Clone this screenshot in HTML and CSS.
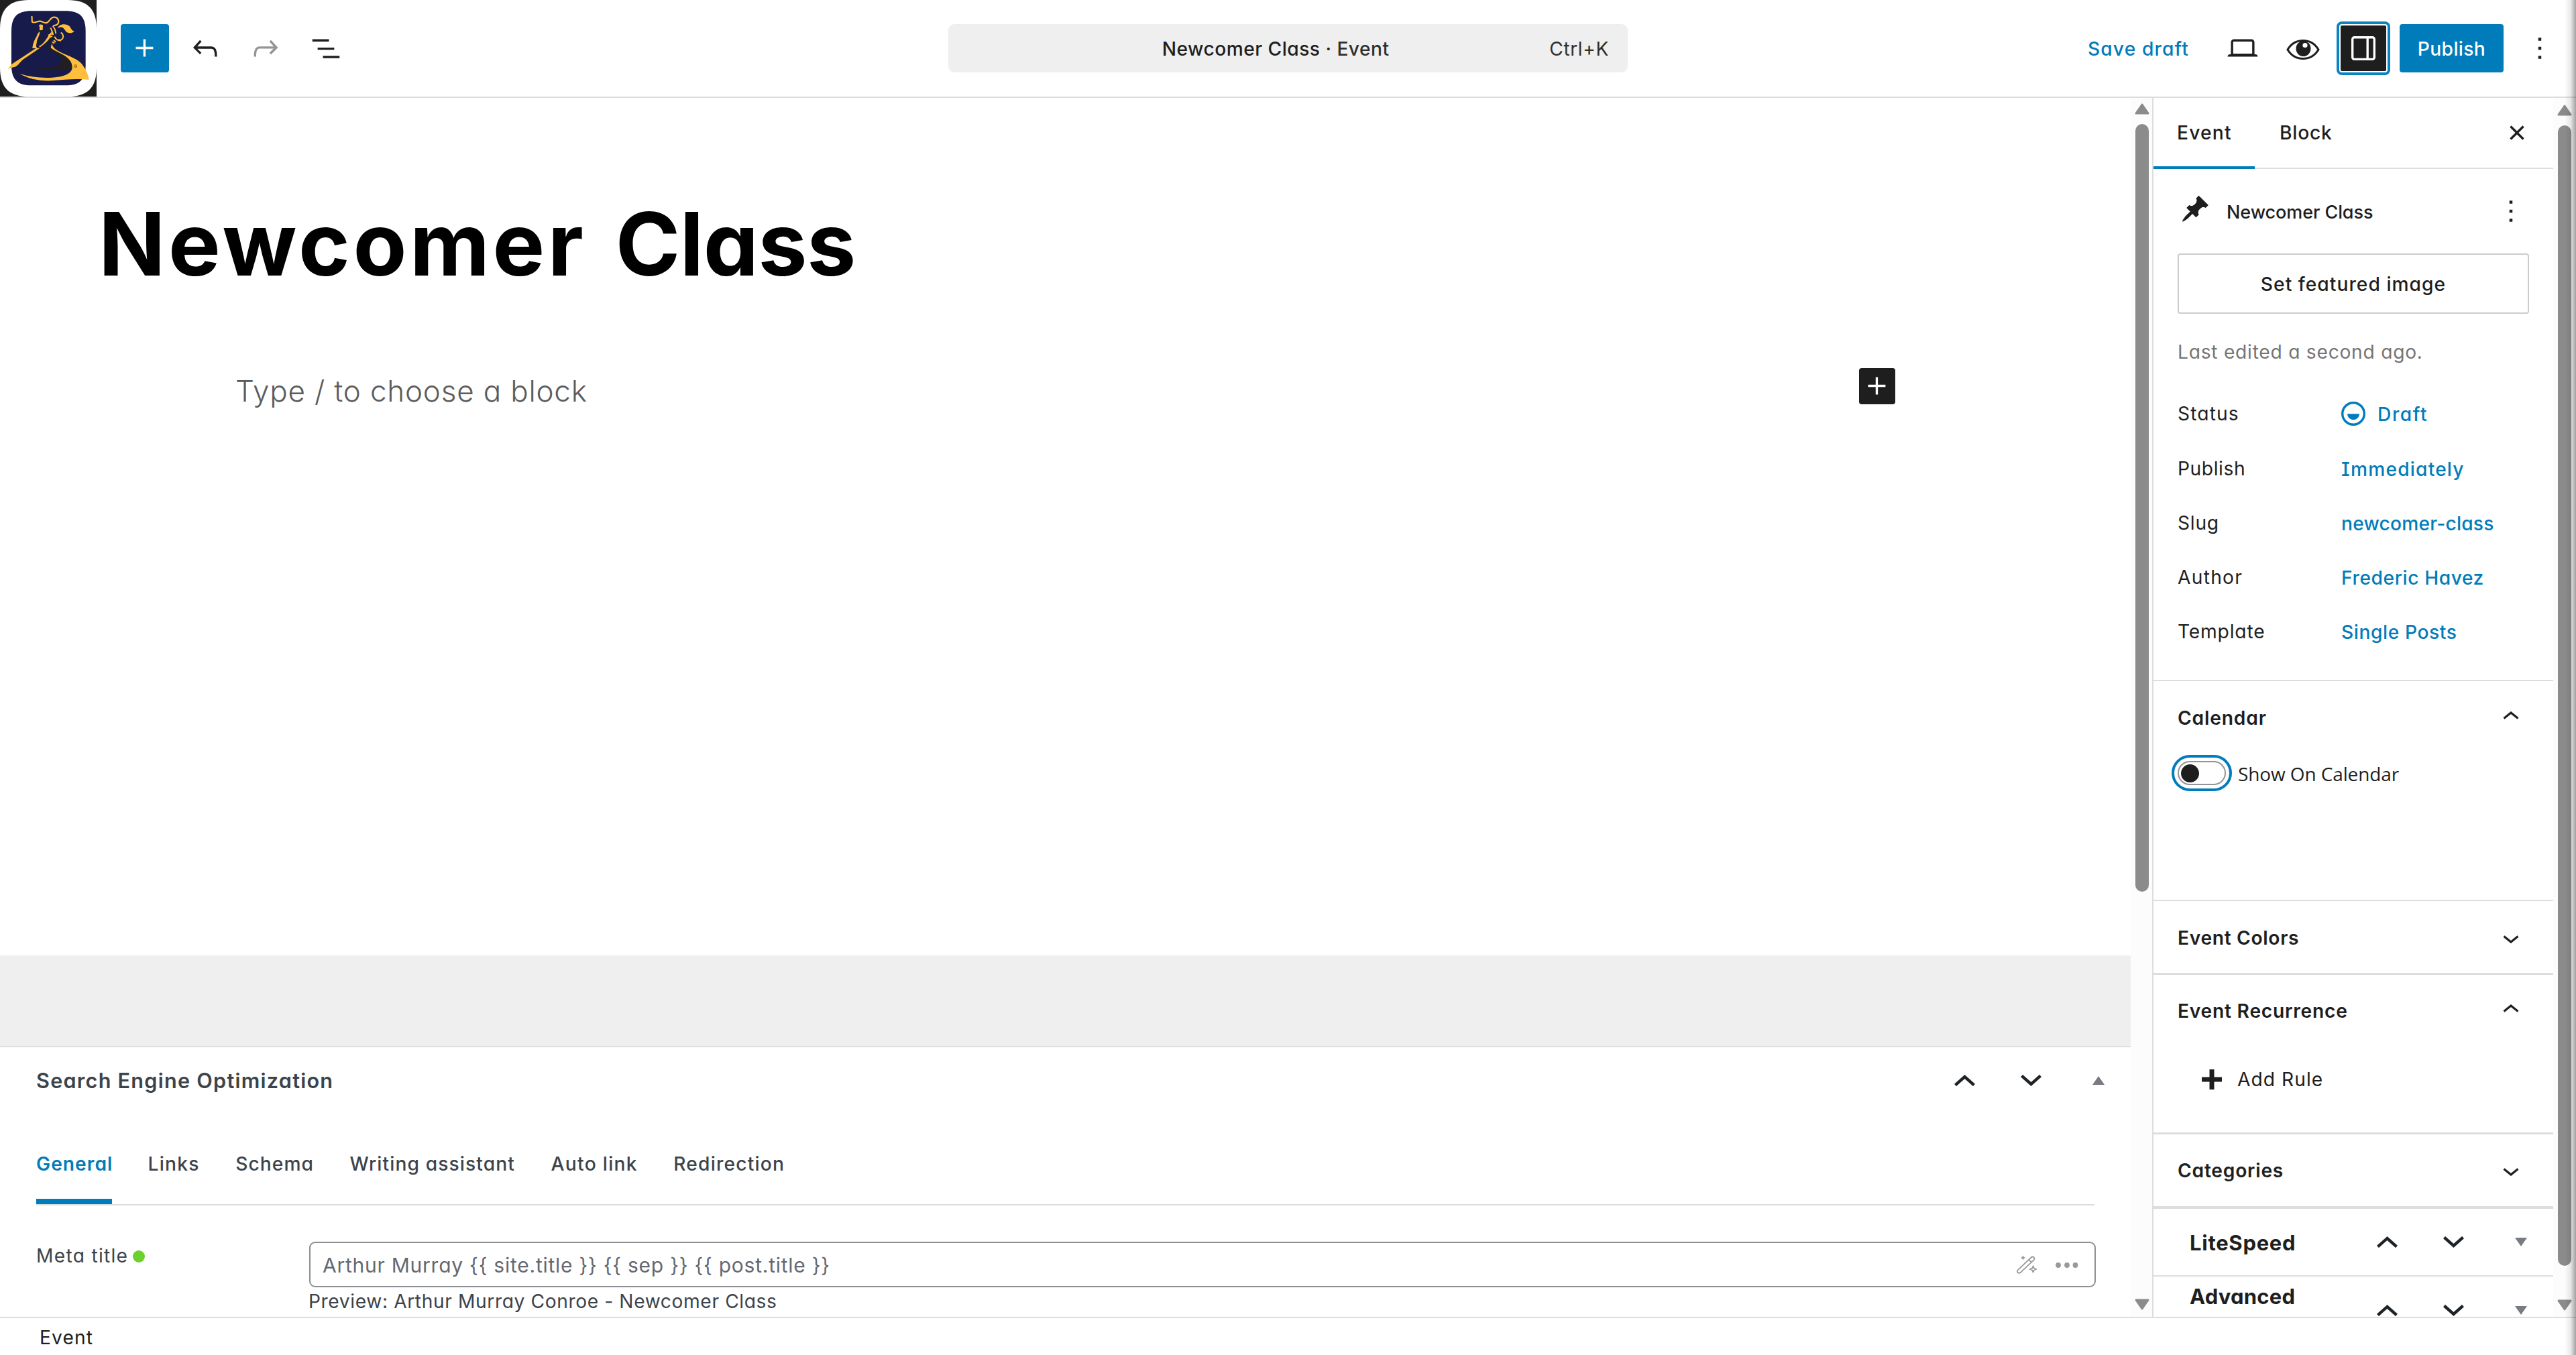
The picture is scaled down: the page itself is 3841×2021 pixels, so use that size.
FILE: index.html
```html
<!DOCTYPE html>
<html lang="en">
<head>
<meta charset="utf-8">
<title>Edit Event</title>
<link rel="stylesheet" href="styles.css">
</head>
<body>
<header class="topbar">
  <div class="topbar-left">
    <svg class="logo" viewBox="0 0 432 432">
      <rect width="432" height="432" fill="#1f1f1f"/>
      <path d="M0 130C0 40 40 0 130 0H302C392 0 432 40 432 130V302C432 392 392 432 302 432H130C40 432 0 392 0 302Z" fill="#fff"/>
      <path d="M51 140C51 75 77 49 142 49H292C357 49 383 75 383 140V290C383 355 357 382 292 382H142C77 382 51 355 51 290Z" fill="#171b4b"/>
      <path d="M156 136c10 10 26 3 38 1s22 6 30-6l12-4-14 34-48 42-30 16 22-50 10-28z" fill="#171b4b"/>
      <path d="M232 158l-62 56-62 46c-22 16-30 28-50 39 30-8 60-38 84-54l78-60 12-2 6-24z" fill="#231f20"/>
      <path d="M214 200c-4 14 4 24 18 30 30 14 44 28 42 46-4 18-34 26-70 28-28 2-56-2-82-10 40 22 92 20 126 17 30-2 52 0 74-2 4-34-8-50-30-62-26-14-50-22-62-32z" fill="#231f20"/>
      <path d="M36 311c6-16 20-28 44-42l82-54h16l-76 52c-14 12-18 24-34 32-12 2-20 4-32 12z" fill="#ffbf3c"/>
      <path d="M232 194c4 18 14 26 32 36 40 22 90 30 112 70 12 20 20 38 22 57-56-7-108 0-168 4-58 2-106-10-142-31 60 18 120 22 172 14 38-6 62-20 63-42 1-28-20-46-46-60-22-12-46-22-50-30z" fill="#ffbf3c"/>
      <path d="M142 72c2 10 0 20 2 26 8 8 22-4 36-3 14 1 20 14 34 4 10-8 14-22 28-22 16 0 24 14 18 28-4 8-12 8-22 10" fill="none" stroke="#ffbf3c" stroke-width="6.500"/>
      <path d="M174 112c6-4 12-2 18 0l-1 22-15 6c2-10 2-18-2-28z" fill="#ffbf3c"/>
      <path d="M170 148l8-6c0 20-14 32-14 50-2 12-4 14 2 24h-21c2-24 10-38 18-52z" fill="#ffbf3c"/>
      <path d="M174 206c14-4 26-20 36-36l24-34-12 36c-14 18-30 30-44 40z" fill="#ffbf3c"/>
      <path d="M156 136c14 8 24-2 36 2s20 2 30-4M190 152c-10 20-16 36-14 50" fill="none" stroke="#231f20" stroke-width="4"/>
      <path d="M258 126c8-18 28-20 44-14 18 8 12 22 31 29-16 11-34 9-42-6-8-14-18-18-33-9z" fill="#ffbf3c"/>
      <path d="M236 116c8 8 12 22 14 34M226 124c6 12 10 22 12 32" fill="none" stroke="#ffbf3c" stroke-width="6"/>
      <path d="M272 146c14 8 14 28-2 34-16 4-22-8-26-16M216 158l20-8M214 168l20-6M240 180l10 8M234 188l10 6M262 176l10 8" fill="none" stroke="#ffbf3c" stroke-width="6"/>
      <circle cx="338" cy="296" r="6" fill="none" stroke="#5c481d" stroke-width="2.500"/>
      <circle cx="338" cy="296" r="2" fill="#5c481d"/>
    </svg>
    <div class="tools">
      <button class="icon-btn primary"><svg class="i24" viewBox="0 0 24 24"><path d="M11 12.500V17.500H12.500V12.500H17.500V11H12.500V6H11V11H6V12.500H11Z"/></svg></button>
      <button class="icon-btn"><svg class="i24" viewBox="0 0 24 24"><path d="M18.300 11.700c-.6-.6-1.400-.9-2.300-.9H6.700l2.900-3.300-1.100-1-4.500 5L8.500 16l1-1-2.700-2.700H16c.5 0 .9.200 1.300.5 1 1 1 3.400 1 4.500v.3h1.500v-.2c0-1.500 0-4.300-1.500-5.700z"/></svg></button>
      <button class="icon-btn disabled"><svg class="i24" viewBox="0 0 24 24"><path d="M15.600 6.500l-1.100 1 2.900 3.300H8c-.9 0-1.700.3-2.300.9-1.400 1.500-1.400 4.200-1.400 5.600v.2h1.500v-.3c0-1.100 0-3.500 1-4.500.3-.3.7-.5 1.300-.5h9.200L14.500 15l1.100 1.100 4.600-4.600-4.600-5z"/></svg></button>
      <button class="icon-btn"><svg class="i24" viewBox="0 0 24 24"><path d="M3 6h11v1.500H3V6Zm3.500 5.500h11V13h-11v-1.500ZM21 17H10v1.500h11V17Z"/></svg></button>
    </div>
  </div>
  <div class="command">
    <div class="command-title w500 track-14">Newcomer Class · <span class="soft">Event</span></div>
    <div class="track-19 soft">Ctrl+K</div>
  </div>
  <div class="topbar-right">
    <a class="save w500 track-38">Save draft</a>
    <button class="icon-btn"><svg class="i24" viewBox="0 0 24 24"><path d="M20.500 16h-.7V8c0-1.100-.9-2-2-2H6.200c-1.100 0-2 .9-2 2v8h-.7c-.8 0-1.500.7-1.500 1.500h20c0-.8-.7-1.500-1.500-1.500zM5.700 8c0-.3.2-.5.5-.5h11.600c.3 0 .5.200.5.500v7.600H5.700V8z"/></svg></button>
    <button class="icon-btn"><svg class="eye" viewBox="0 0 50 32"><path d="M2 16C8 6 16 2.500 25 2.500S42 6 48 16C42 26 34 29.500 25 29.500S8 26 2 16Z" fill="none" stroke="#1e1e1e" stroke-width="3"/><ellipse cx="25.500" cy="14.500" rx="11" ry="11.500"/><ellipse cx="28" cy="9.500" rx="3.600" ry="3.600" fill="#fff"/></svg></button>
    <button class="icon-btn pressed"><svg class="i24" viewBox="0 0 24 24"><path fill-rule="evenodd" d="M18 4H6c-1.100 0-2 .9-2 2v12c0 1.100.9 2 2 2h12c1.100 0 2-.9 2-2V6c0-1.100-.9-2-2-2zm-4 14.500H6c-.3 0-.5-.2-.5-.5V6c0-.3.2-.5.5-.5h8v13zm4.500-.5c0 .3-.2.5-.5.500h-2.500v-13H18c.3 0 .5.200.5.500v12z"/></svg></button>
    <button class="publish w500 track-10">Publish</button>
    <button class="icon-btn"><svg class="i24" viewBox="0 0 24 24"><path d="M13 19h-2v-2h2v2zm0-6h-2v-2h2v2zm0-6h-2V5h2v2z"/></svg></button>
  </div>
</header>

<div class="main">
  <main class="editor">
    <section class="canvas">
      <h1>Newcomer <span class="tight">Class</span></h1>
      <div class="block-row">
        <p>Type / to choose a block</p>
        <button class="inserter"><svg class="i24" viewBox="0 0 24 24"><path d="M11 12.500V17.500H12.500V12.500H17.500V11H12.500V6H11V11H6V12.500H11Z"/></svg></button>
      </div>
    </section>
    <div class="spacer"></div>
    <section class="seo">
      <div class="seo-head">
        <h2>Search Engine Optimization</h2>
        <svg class="chev" viewBox="0 0 31 17"><path d="M1.500 15.500L15.500 3L29.500 15.500"/></svg>
        <svg class="chev chev-next" viewBox="0 0 31 17"><path d="M1.500 1.500L15.500 14L29.500 1.500"/></svg>
        <svg class="tri" viewBox="0 0 18 13"><path d="M0 13L9 0L18 13Z"/></svg>
      </div>
      <nav class="seo-tabs">
        <a class="active track-34">General</a>
        <a class="track-45">Links</a>
        <a class="track-34">Schema</a>
        <a class="track-38">Writing assistant</a>
        <a class="track-45">Auto link</a>
        <a class="track-41">Redirection</a>
      </nav>
      <div class="field">
        <div class="label"><span class="track-45">Meta title</span><i class="dot"></i></div>
        <div class="control">
          <div class="input">
            <span class="value">Arthur Murray {{ site.title }} {{ sep }} {{ post.title }}</span>
            <svg class="wand" viewBox="0 0 30 28"><g fill="none" stroke="#999" stroke-width="1.800"><path d="M1.700 22.300L21.500 3.500c3-2.500 6.500.8 4 4L6 25.700c-3 2.600-7-.6-4.300-3.400zM18 6.800l4.200 4"/><path d="M24.500 16.500l1.500 3.200 3 1.300-3 1.400-1.500 3.100-1.500-3.100-3-1.400 3-1.300z"/></g><path d="M9.500.5l1.300 2.300 2.400 1.200-2.400 1.200-1.300 2.300-1.300-2.300L5.800 4l2.400-1.200z" fill="#999"/></svg>
            <svg class="more" viewBox="0 0 34 8"><circle cx="4" cy="4" r="3.900"/><circle cx="17" cy="4" r="3.900"/><circle cx="29.500" cy="4" r="3.900"/></svg>
          </div>
          <div class="preview">Preview: Arthur Murray Conroe - Newcomer Class</div>
        </div>
      </div>
    </section>
  </main>
  <div class="scrollbar editor-scroll">
    <svg class="arrow" viewBox="0 0 22 17"><path d="M11 2L20 15H2Z"/></svg>
    <div class="thumb"></div>
    <svg class="arrow" viewBox="0 0 22 17"><path d="M11 15L20 2H2Z"/></svg>
  </div>

  <aside class="sidebar">
    <div class="side-tabs">
      <a class="side-tab active track-41">Event</a>
      <a class="side-tab block-tab track-25">Block</a>
      <svg class="i24 close" viewBox="0 0 24 24"><path d="M12 13.060l3.712 3.713 1.061-1.060L13.061 12l3.712-3.712-1.060-1.060L12 10.938 8.288 7.227l-1.061 1.060L10.939 12l-3.712 3.712 1.060 1.061L12 13.061z"/></svg>
    </div>
    <section class="summary">
      <div class="card">
        <svg class="pin" viewBox="0 0 20 20"><path d="M10.440 3.020l1.820-1.820 6.360 6.350-1.830 1.820c-1.050-.68-2.480-.57-3.410.36l-.75.75c-.92.93-1.040 2.350-.35 3.410l-1.830 1.820-2.410-2.410-2.800 2.790c-.42.42-3.380 2.710-3.800 2.290s1.860-3.390 2.280-3.810l2.790-2.790L4.100 9.360l1.830-1.820c1.050.69 2.480.57 3.400-.36l.75-.75c.93-.92 1.050-2.350.36-3.410z"/></svg>
        <div class="card-title">Newcomer Class</div>
        <svg class="i24" viewBox="0 0 24 24"><path d="M13 19h-2v-2h2v2zm0-6h-2v-2h2v2zm0-6h-2V5h2v2z"/></svg>
      </div>
      <button class="featured w500 track-34">Set featured image</button>
      <p class="edited">Last edited a second ago.</p>
      <dl class="rows">
        <div class="row first"><dt class="track-38">Status</dt><dd class="track-54"><svg class="draft" viewBox="0 0 36 36"><circle cx="18" cy="18" r="16.300" fill="none" stroke="#007cba" stroke-width="3.400"/><path d="M9 18.200h18a9 9 0 0 1-18 0z" fill="#007cba"/></svg>Draft</dd></div>
        <div class="row"><dt class="track-19">Publish</dt><dd class="track-41">Immediately</dd></div>
        <div class="row"><dt class="track-25">Slug</dt><dd class="track-5">newcomer-class</dd></div>
        <div class="row"><dt class="track-45">Author</dt><dd class="track-19">Frederic Havez</dd></div>
        <div class="row"><dt class="track-28">Template</dt><dd class="track-19">Single Posts</dd></div>
      </dl>
    </section>
    <section class="panel calendar">
      <div class="panel-head"><h3 class="track-28">Calendar</h3><svg class="caret up" viewBox="0 0 24 12"><path d="M1.500 10.500L12 2L22.500 10.500"/></svg></div>
      <label class="toggle-row"><span class="toggle"><span class="track"><i class="knob"></i></span></span><span class="toggle-label">Show On Calendar</span></label>
    </section>
    <section class="panel colors">
      <div class="panel-head"><h3 class="track-22">Event Colors</h3><svg class="caret down" viewBox="0 0 24 12"><path d="M1.500 1.500L12 10L22.500 1.500"/></svg></div>
    </section>
    <section class="panel recurrence">
      <div class="panel-head"><h3 class="track-25">Event Recurrence</h3><svg class="caret up" viewBox="0 0 24 12"><path d="M1.500 10.500L12 2L22.500 10.500"/></svg></div>
      <div class="add-rule"><svg class="plus" viewBox="0 0 30 30"><path d="M11.500 0h7v11.500H30v7H18.500V30h-7V18.500H0v-7h11.500z"/></svg><span class="track-34">Add Rule</span></div>
    </section>
    <section class="panel categories">
      <div class="panel-head"><h3 class="track-25">Categories</h3><svg class="caret down" viewBox="0 0 24 12"><path d="M1.500 1.500L12 10L22.500 1.500"/></svg></div>
    </section>
    <section class="metabox lite">
      <h3 class="track-22">LiteSpeed</h3>
      <svg class="chev" viewBox="0 0 31 17"><path d="M1.500 15.500L15.500 3L29.500 15.500"/></svg>
      <svg class="chev chev-next" viewBox="0 0 31 17"><path d="M1.500 1.500L15.500 14L29.500 1.500"/></svg>
      <svg class="tri" viewBox="0 0 18 13"><path d="M0 0L9 13L18 0Z"/></svg>
    </section>
    <section class="metabox advanced">
      <h3 class="track-5">Advanced</h3>
      <svg class="chev" viewBox="0 0 31 17"><path d="M1.500 15.500L15.500 3L29.500 15.500"/></svg>
      <svg class="chev chev-next" viewBox="0 0 31 17"><path d="M1.500 1.500L15.500 14L29.500 1.500"/></svg>
      <svg class="tri" viewBox="0 0 18 13"><path d="M0 0L9 13L18 0Z"/></svg>
    </section>
  </aside>
  <div class="scrollbar side-scroll">
    <svg class="arrow" viewBox="0 0 22 17"><path d="M11 2L20 15H2Z"/></svg>
    <div class="thumb"></div>
    <svg class="arrow" viewBox="0 0 22 17"><path d="M11 15L20 2H2Z"/></svg>
  </div>
</div>
<footer class="footer track-38">Event</footer>
<div class="edge-shadow"></div>
</body>
</html>
```
FILE: styles.css
```css
* { box-sizing: border-box; }
body {
  margin: 0;
  width: 3841px;
  height: 2021px;
  overflow: hidden;
  position: relative;
  display: flex;
  flex-direction: column;
  background: #fff;
  color: #1e1e1e;
  font: 400 28.2px/40px Inter, "Liberation Sans", sans-serif;
  font-feature-settings: "cv11", "cv08";
  white-space: nowrap;
}
h1, h2, h3, p, dl, dd, dt { margin: 0; }
button { border: 0; padding: 0; background: none; font: inherit; font-feature-settings: inherit; color: inherit; }
svg { display: block; flex: none; fill: currentColor; }

.w500 { font-weight: 460; }
.soft { color: #2f2f2f; }
.track-5 { letter-spacing: .007em; }
.track-10 { letter-spacing: .013em; }
.track-14 { letter-spacing: .0165em; }
.track-19 { letter-spacing: .0205em; }
.track-22 { letter-spacing: .0235em; }
.track-25 { letter-spacing: .027em; }
.track-28 { letter-spacing: .0295em; }
.track-34 { letter-spacing: .0365em; }
.track-38 { letter-spacing: .0395em; }
.track-41 { letter-spacing: .042em; }
.track-45 { letter-spacing: .0452em; }
.track-54 { letter-spacing: .055em; }

.i24 { width: 54px; height: 54px; }

/* top bar */
.topbar { height: 146px; flex: none; border-bottom: 2px solid #ddd; display: flex; align-items: center; }
.topbar-left { width: 1414px; display: flex; align-items: center; gap: 36px; }
.logo { width: 144px; height: 144px; }
.tools { display: flex; gap: 18px; }
.icon-btn { width: 72px; height: 72px; display: flex; align-items: center; justify-content: center; border-radius: 4px; }
.icon-btn.primary { background: #007cba; color: #fff; }
.icon-btn.disabled { color: #949494; }
.icon-btn.pressed { background: #1e1e1e; color: #fff; border: 2px solid #fff; box-shadow: 0 0 0 4px #0a84c1; }
.eye { width: 50px; height: 32px; margin-top: 3px; }
.command { width: 1013px; height: 72px; border-radius: 9px; background: #efefef; display: flex; align-items: center; padding: 2px 28px 0 80px; }
.command-title { flex: 1; text-align: center; }
.topbar-right { flex: 1; display: flex; align-items: center; justify-content: flex-end; gap: 18px; padding-right: 18px; }
.save { color: #007cba; padding: 2px 26px 0 0; }
.publish { width: 155px; height: 72px; border-radius: 4px; background: #007cba; color: #fff; padding-top: 2px; }

/* editor */
.main { flex: 1; min-height: 0; display: flex; overflow: hidden; }
.editor { width: 3177px; display: flex; flex-direction: column; overflow: hidden; }
.canvas { height: 1279px; flex: none; padding-top: 138px; }
h1 { color: #000; font-size: 130.6px; line-height: 160px; font-weight: 700; letter-spacing: .034em; word-spacing: 8px; padding-left: 147px; }
.tight { letter-spacing: -.004em; }
.block-row { display: flex; justify-content: space-between; align-items: flex-start; margin: 105px 351px 0; }
.block-row p { font-size: 44px; line-height: 64px; font-weight: 300; letter-spacing: .018em; color: #5c5c5c; padding-top: 2px; }
.inserter { width: 54px; height: 54px; border-radius: 4px; background: #1e1e1e; color: #fff; }
.spacer { height: 135px; flex: none; background: #efefef; }
.seo { border-top: 2px solid #ddd; color: #3c434a; padding: 0 52px 0 54px; }
.seo-head { height: 100px; display: flex; align-items: center; margin-right: -13px; }
.seo-head h2 { flex: 1; font-size: 30.6px; line-height: 40px; font-weight: 600; letter-spacing: .041em; }
.seo-head svg { margin-bottom: 2px; }
.chev { width: 31px; height: 17px; fill: none; stroke: #1d2327; stroke-width: 4.4; }
.chev-next { margin: 0 76px 0 68px; }
.tri { width: 18px; height: 13px; fill: #787c82; }
.seo-tabs { height: 136px; border-bottom: 2px solid #ddd; margin-right: 2px; display: flex; gap: 53.5px; font-weight: 460; line-height: 52px; }
.seo-tabs a { padding-top: 48px; height: 134px; }
.seo-tabs .active { width: 113px; font-weight: 560; color: #007cba; border-bottom: 8px solid #007cba; }
.field { display: flex; padding-top: 54px; }
.label { width: 407px; display: flex; align-items: center; gap: 7px; height: 42px; }
.dot { width: 18px; height: 18px; border-radius: 50%; background: #6bd12b; margin-top: 2px; }
.control { flex: 1; }
.input { height: 68px; border: 2px solid #8c8f94; border-radius: 9px; display: flex; align-items: center; padding: 0 24px 0 18px; color: #646970; }
.value { flex: 1; font-size: 30px; letter-spacing: .0251em; padding-top: 2px; }
.wand { width: 30px; height: 28px; margin-right: 28px; }
.more { width: 34px; height: 8px; fill: #999; margin-top: 1px; }
.preview { letter-spacing: .0213em; margin: 1px 0 0 -1px; }

/* scrollbars */
.scrollbar { background: #fcfcfc; display: flex; flex-direction: column; align-items: center; color: #8b8b8b; }
.scrollbar .thumb { width: 20px; border-radius: 10px; background: #8b8b8b; }
.arrow { width: 22px; height: 17px; stroke: currentColor; stroke-width: 3; stroke-linejoin: round; }
.editor-scroll { width: 32px; padding: 8px 0 0 2px; }
.editor-scroll .thumb { height: 1145px; margin: 14px 0 607px; }
.side-scroll { width: 34px; padding-top: 10px; }
.side-scroll .thumb { height: 1701px; margin: 14px 0 50px; }

/* settings sidebar */
.sidebar { width: 598px; border-left: 2px solid #ddd; display: flex; flex-direction: column; overflow: hidden; }
.side-tabs { height: 106px; flex: none; border-bottom: 2px solid #ddd; display: flex; align-items: flex-start; font-weight: 460; }
.side-tab { height: 106px; line-height: 105px; padding: 0 35px; }
.side-tab.active { width: 151px; border-bottom: 4px solid #007cba; }
.block-tab { padding-left: 37px; }
.close { margin: 25px 27px 0 auto; }
.summary { height: 762px; flex: none; padding: 0 36px; }
.card { height: 126px; display: flex; align-items: center; }
.pin { width: 45px; height: 45px; margin: 0 24px 8px 4px; }
.card-title { flex: 1; font-size: 27px; font-weight: 460; letter-spacing: -.003em; padding-top: 4px; }
.card .i24 { margin-right: 0; }
.featured { width: 524px; height: 90px; border: 2px solid #ccc; border-radius: 4px; padding-top: 1px; }
.edited { color: #757575; letter-spacing: .0262em; margin-top: 37px; }
.rows { padding-top: 31px; }
.row { height: 81px; display: flex; align-items: center; }
.row.first { margin-bottom: 1px; }
.row dt { width: 244px; }
.row dd { display: flex; align-items: center; color: #007cba; font-weight: 460; padding-top: 2px; }
.draft { width: 36px; height: 36px; margin: 0 18px 2px 0; }
.panel { flex: none; border-top: 2px solid #ddd; padding-left: 36px; }
.panel-head { height: 110px; display: flex; justify-content: space-between; align-items: center; padding-right: 51px; }
h3 { font-size: 28.2px; line-height: 40px; font-weight: 560; }
.caret { width: 24px; height: 12px; fill: none; stroke: #1e1e1e; stroke-width: 3.2; }
.caret.up { margin-bottom: 8px; }
.caret.down { margin-top: 4px; }
.calendar { height: 328px; }
.toggle-row { display: flex; align-items: center; gap: 9px; margin-left: -9px; }
.toggle { width: 90px; height: 54px; border: 4.5px solid #007cba; border-radius: 27px; padding: 5px; display: flex; }
.track { flex: 1; border: 2px solid #949494; border-radius: 18px; display: flex; align-items: center; padding-left: 3px; }
.knob { width: 27px; height: 27px; border-radius: 50%; background: #1e1e1e; }
.toggle-label { font: 400 28px/40px "Open Sans", sans-serif; letter-spacing: -.004em; padding-top: 2px; }
.colors { height: 109px; }
.recurrence { height: 238px; border-top-width: 3px; }
.recurrence .panel-head { height: 108px; }
.add-rule { display: flex; align-items: center; gap: 23px; height: 96px; padding-left: 36px; }
.plus { width: 30px; height: 30px; }
.categories { height: 110px; border-top-width: 3px; }
.categories .panel-head { height: 108px; }
.metabox { flex: none; display: flex; align-items: center; border-top: 2px solid #ddd; padding: 0 39px 0 54px; }
.metabox h3 { flex: 1; font-size: 31px; font-weight: 660; }
.lite { height: 103px; border-top-width: 4px; }
.lite h3 { padding-top: 2px; }
.advanced { height: 104px; }
.advanced h3 { margin-bottom: 43px; }
.advanced svg { margin-bottom: 1px; }

.footer { height: 57px; flex: none; border-top: 2px solid #ddd; line-height: 59px; padding-left: 59px; }
.edge-shadow { position: absolute; top: 0; right: 0; width: 17px; height: 2021px; background: linear-gradient(to right, rgba(0,0,0,0), rgba(0,0,0,.08) 50%, rgba(0,0,0,.36)); }
```
